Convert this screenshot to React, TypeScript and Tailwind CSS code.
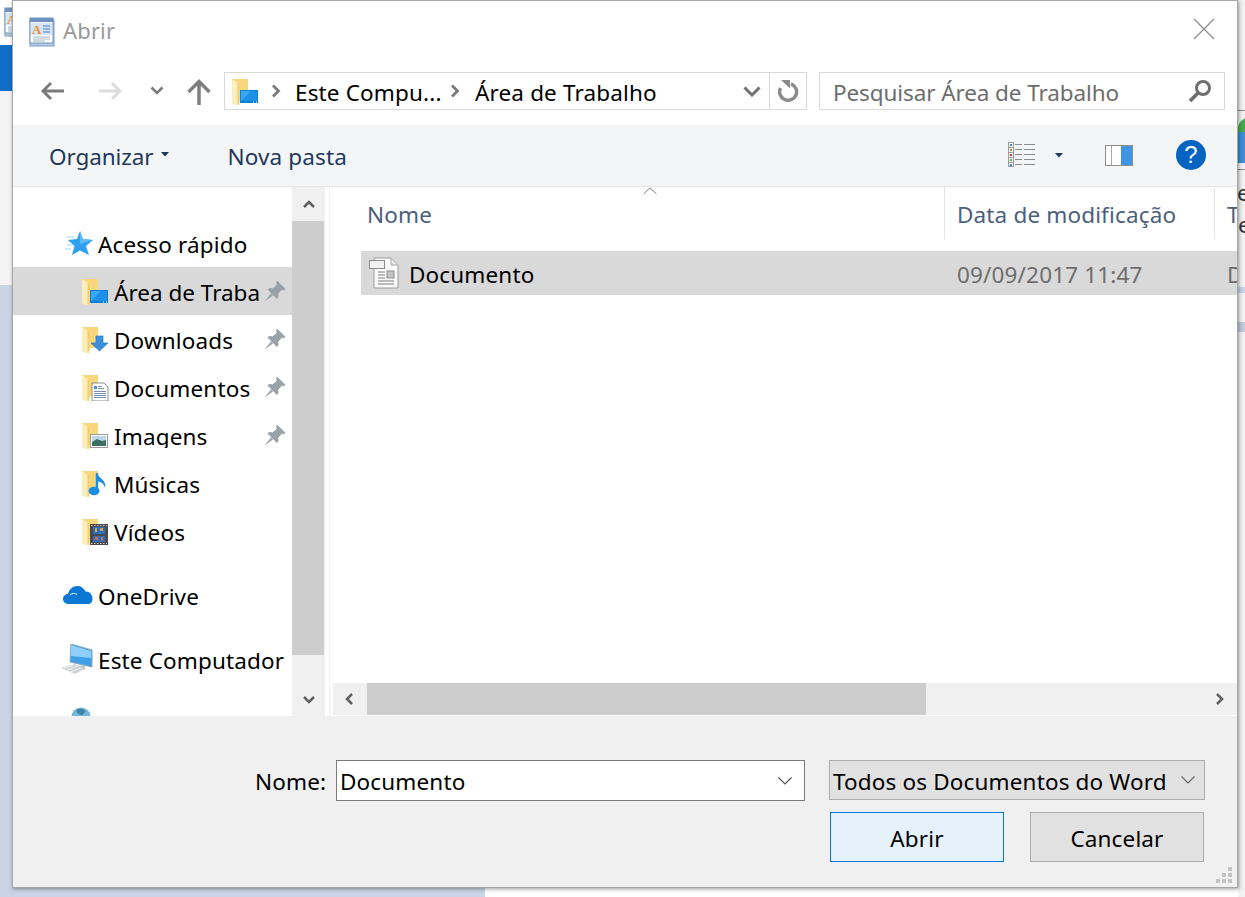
import React from "react";

const Folder = ({ children }: { children?: React.ReactNode }) => (
  <svg width="28" height="28" viewBox="0 0 28 28" className="shrink-0">
    <path d="M0 2H16V23H8L6.500 29L0 26Z" fill="#f8d77c" />
    <path d="M0 2L6 6V29L0 26Z" fill="#fdeebc" />
    <path d="M6 6V29" stroke="#e8bf55" strokeWidth="0.7" />
    {children}
  </svg>
);

const Desktop = () => (
  <>
    <rect x="8" y="13" width="18" height="13" fill="#0a7fd6" />
    <path d="M9 14H25V24H9Z" fill="#3aa7f5" />
    <path d="M9 24L19 14H25V24Z" fill="#1d8fe6" />
    <path d="M21 25h1M24 25h1" stroke="#fff" />
  </>
);
const DlIcon = () => (
  <path d="M14 11H21V18H26L17.500 26L9 18H14Z" fill="#3b8fdc" stroke="#2a78c4" strokeWidth="0.7" />
);
const DocOv = () => (
  <>
    <path d="M10 10H22L26 14V28H10Z" fill="#fff" stroke="#8c8c8c" />
    <path d="M12 13h3v3h-3z" fill="#3b8fdc" />
    <path d="M16 13.500h4M16 15.500h6M12 18.500h12M12 20.500h12M12 22.500h12M12 24.500h12" stroke="#6c86a6" strokeWidth="0.9" />
  </>
);
const ImgOv = () => (
  <>
    <rect x="8.500" y="13.500" width="17" height="13" fill="#fff" stroke="#9b9b9b" />
    <rect x="10" y="15" width="14" height="10" fill="#bcd8ea" />
    <path d="M10 21L15 18L20 20L24 19V25H10Z" fill="#3c6f63" />
  </>
);
const MusicOv = () => (
  <>
    <path d="M15 4V22" stroke="#1c8fe0" strokeWidth="2.400" />
    <ellipse cx="12" cy="22" rx="5.500" ry="4.200" fill="#1c8fe0" />
    <path d="M15 4C17 10 25 11 23 19C22 14 18 13 15 12Z" fill="#1c8fe0" />
  </>
);
const VideoOv = () => (
  <>
    <rect x="8" y="7" width="18" height="21" fill="#4a4a4a" />
    <path d="M9 8.500h16M9 26.500h16" stroke="#c9c9c9" strokeDasharray="1.500 1.500" />
    <rect x="11" y="10" width="12" height="7" fill="#2a6fc4" />
    <rect x="11" y="19" width="12" height="6" fill="#2a6fc4" />
    <path d="M13 11h2v4h-2zM18 11h3v3h-3z" fill="#d6a33a" />
    <path d="M13 20h3v3h-3zM19 20h2v4h-2z" fill="#c96a4b" />
  </>
);

const Pin = () => (
  <svg width="22" height="22" viewBox="0 0 22 22" className="shrink-0">
    <path d="M13 0.500L21.500 9L19.500 10.500L18 9.500L14 14C15 16 14.500 17.500 13 19L3.500 9.500C5 8 6.500 7.500 8.500 8.500L13 4.500L12 3Z" fill="#98a1a7" />
    <path d="M7 13.500L0.500 21.500L9 15.500Z" fill="#98a1a7" />
  </svg>
);

const Star = () => (
  <svg width="28" height="25" viewBox="0 0 28 25">
    <path d="M1 6h8M3 10h6M2 14h6M0 18h6" stroke="#9fd6fa" strokeWidth="1" />
    <path d="M15 0L18 8L28 9L21 15L24 24L15 19.500L7 24L9.500 15L3 9L12 8Z" fill="#2f9ff0" />
    <path d="M15 0L18 8L28 9L15 13Z" fill="#5cbcf8" />
  </svg>
);

const Cloud = () => (
  <svg width="30" height="20" viewBox="0 0 30 20">
    <path d="M6 19C2 19 0 16.500 0 14C0 11 2.500 9 5 9C6 4 10 1 14.500 1C18 1 21 3 22.500 6.500C27 6.500 29.500 9.500 29.500 14C29.500 17 27.500 19 25 19Z" fill="#0a78d4" />
    <path d="M7 10C9 8 12 8 14 9.500" stroke="#fff" strokeWidth="1" fill="none" />
  </svg>
);

const Computer = () => (
  <svg width="34" height="30" viewBox="0 0 34 30">
    <path d="M10 0L31 6V23L9 18Z" fill="#3f9fe8" stroke="#8fa6b8" />
    <path d="M10 1L30 7V14L10 12Z" fill="#8fd0fb" />
    <path d="M20 21L24 22V26L18 25Z" fill="#b8c2ca" />
    <path d="M0 24L13 20L25 24L14 30Z" fill="#cfd3d6" />
    <path d="M3 24L13 21M6 26L17 22M9 28L20 24" stroke="#eef0f2" />
  </svg>
);

const Globe = () => (
  <svg width="20" height="20" viewBox="0 0 22 22">
    <circle cx="11" cy="11" r="10.500" fill="#74b4d8" />
    <path d="M6 3C10 1 14 2 16 5L12 9L7 7Z" fill="#3d82a8" />
  </svg>
);

const AppIcon = ({ className }: { className?: string }) => (
  <svg width="26" height="30" viewBox="0 0 26 30" className={className}>
    <rect x="1" y="3" width="24" height="26" fill="#b3cbe3" stroke="#7d9cbd" />
    <rect x="1" y="1" width="23" height="25" fill="#fff" stroke="#6f93b8" />
    <rect x="1" y="1" width="23" height="4" fill="#6f93c0" />
    <path d="M2 6H23V18H2Z" fill="#d6e6f7" />
    <text x="3" y="17" fontSize="13" fontWeight="700" fill="#f08a24" fontFamily="Liberation Serif, serif">A</text>
    <path d="M14 9h7M14 12h7M14 15h7" stroke="#3d7fd0" />
    <path d="M4 20h17M4 22h17M4 24h12" stroke="#a4b6c8" />
  </svg>
);

const NavRow = ({ icon, label, selected, pin }: { icon: React.ReactNode; label: string; selected?: boolean; pin?: boolean }) => (
  <div className={`h-[48px] flex items-center pl-[69px] pr-[6px] shrink-0 ${selected ? "bg-[#d9d9d9] tracking-[0px]" : ""}`}>
    <div className="w-[32px] shrink-0"><Folder>{icon}</Folder></div>
    <span className="flex-1 whitespace-nowrap overflow-hidden text-black">{label}</span>
    {pin && <Pin />}
  </div>
);

const Chev = ({ d, color = "#606060", w = 2.5, size = 16 }: { d: string; color?: string; w?: number; size?: number }) => (
  <svg width={size} height={size} viewBox="0 0 16 16" className="shrink-0">
    <path d={d} fill="none" stroke={color} strokeWidth={w} />
  </svg>
);

const ThinDown = ({ color = "#555" }: { color?: string }) => (
  <svg width="16" height="10" viewBox="0 0 16 10" className="shrink-0">
    <path d="M1.500 1.500L8 8L14.500 1.500" fill="none" stroke={color} strokeWidth="1.200" />
  </svg>
);

const ViewIcon = () => (
  <svg width="28" height="26" viewBox="0 0 28 26">
    <rect x="0.500" y="0.500" width="5" height="24" fill="#fff" stroke="#9a9a9a" />
    <path d="M1 5.500h4M1 10.500h4M1 15.500h4M1 20.500h4" stroke="#9a9a9a" />
    <rect x="2" y="2" width="2" height="2" fill="#3b7fc4" />
    <rect x="2" y="7" width="2" height="2" fill="#b08a3a" />
    <rect x="2" y="12" width="2" height="2" fill="#c8342a" />
    <rect x="2" y="17" width="2" height="2" fill="#6aa84f" />
    <rect x="2" y="22" width="2" height="2" fill="#3b7fc4" />
    <path d="M7 2.500h7M16 2.500h11M7 7.500h7M16 7.500h11M7 12.500h7M16 12.500h11M7 17.500h7M16 17.500h11M7 22.500h7M16 22.500h11" stroke="#8c8c8c" />
  </svg>
);

const PaneIcon = () => (
  <svg width="28" height="21" viewBox="0 0 28 21">
    <rect x="0.500" y="0.500" width="27" height="20" fill="#fff" stroke="#8c8c8c" />
    <path d="M6.500 1V20" stroke="#a8a8a8" />
    <rect x="16" y="1" width="11" height="19" fill="#3e95e4" />
  </svg>
);

const DocFile = () => (
  <svg width="30" height="32" viewBox="0 0 30 32" className="shrink-0">
    <path d="M5 1H22L29 8V31H5Z" fill="#fbfbfb" stroke="#9a9a9a" />
    <path d="M22 1V8H29" fill="#e4e4e4" stroke="#a8a8a8" />
    <rect x="0.500" y="3.500" width="15" height="8" fill="#f2f2f2" stroke="#8c8c8c" />
    <rect x="18" y="14" width="7" height="7" fill="#c4c4c4" stroke="#8c8c8c" />
    <path d="M9 15h7M9 18h7M9 21h7M9 24h16M9 27h16" stroke="#7a7a7a" />
  </svg>
);

const Btn = ({ label, primary }: { label: string; primary?: boolean }) => (
  <div className={`w-[174px] h-[50px] pt-[4px] flex items-center justify-center border text-black ${primary ? "bg-[#e5f1fb] border-[#0078d7]" : "bg-[#e1e1e1] border-[#adadad]"}`}>{label}</div>
);

export default function App() {
  return (
    <div className="relative w-[1245px] h-[897px] overflow-hidden bg-[#c9d5e6] font-['Noto_Sans',sans-serif] text-[22.500px] leading-none tracking-[0.150px] [&_span]:pt-[4px]">
      {/* Desktop behind the dialog */}
      <div className="absolute left-0 top-0 w-[12px] h-[45px] bg-white overflow-hidden"><AppIcon className="ml-[4px] mt-[7px]" /></div>
      <div className="absolute left-0 top-[45px] w-[12px] h-[46px] bg-[#0f6fc6]" />
      <div className="absolute left-0 top-[91px] w-[12px] h-[194px] bg-[#f3f3f3]" />
      <div className="absolute left-[485px] top-[888px] w-[760px] h-[9px] bg-white" />
      <div className="absolute left-[1238px] top-0 w-[7px] h-[897px] bg-[#f2f2f2] overflow-hidden text-[#333]">
        <div className="absolute left-0 top-[110px] w-[7px] h-[1px] bg-[#8a8a8a]" />
        <div className="absolute left-0 top-[118px] w-[14px] h-[14px] rounded-tl-[10px] bg-[#4aa84f]" />
        <div className="absolute left-0 top-[132px] w-[14px] h-[31px] bg-[#3d8fd6]" />
        <div className="absolute left-0 top-[169px] w-[7px] h-[1px] bg-[#8a8a8a]" />
        <div className="absolute left-[-12px] top-[182px] whitespace-nowrap">se</div>
        <div className="absolute left-[-6px] top-[214px] whitespace-nowrap">je</div>
        <div className="absolute left-0 top-[287px] w-[7px] h-[6px] bg-[#c9d5e6]" />
        <div className="absolute left-0 top-[322px] w-[7px] h-[10px] bg-[#c0cbdc]" />
      </div>

      {/* Dialog */}
      <div className="absolute left-[12px] top-0 w-[1226px] h-[888px] flex flex-col bg-white border border-[#a6a6a6] shadow-[1px_1px_4px_rgba(0,0,0,0.4)]">
        {/* Title */}
        <div className="h-[59px] shrink-0 flex items-center pl-[16px] pr-[22px]">
          <AppIcon className="mt-[2px]" />
          <div className="ml-[8px] mb-[2px] text-[#999999] text-[22px]">Abrir</div>
          <svg width="22" height="22" viewBox="0 0 22 22" className="ml-auto mb-[4px]">
            <path d="M1 1L21 21M21 1L1 21" stroke="#8f8f8f" strokeWidth="1.300" />
          </svg>
        </div>

        {/* Address row */}
        <div className="h-[65px] shrink-0 flex items-start pt-[12px] pr-[12px]">
          <div className="w-[211px] shrink-0 flex items-center h-[38px] pl-[28px]">
            <svg width="24" height="20" viewBox="0 0 24 20"><path d="M23 10H2M10 2L2 10L10 18" fill="none" stroke="#7a7a7a" strokeWidth="3" /></svg>
            <svg width="24" height="20" viewBox="0 0 24 20" className="ml-[33px]"><path d="M1 10H22M14 2L22 10L14 18" fill="none" stroke="#dcdcdc" strokeWidth="3" /></svg>
            <svg width="14" height="10" viewBox="0 0 14 10" className="ml-[28px]"><path d="M1.500 1.500L7 7L12.500 1.500" fill="none" stroke="#7a7a7a" strokeWidth="2.500" /></svg>
            <svg width="24" height="26" viewBox="0 0 24 26" className="ml-[23px] mt-[2px]"><path d="M12 26V3M1.500 13L12 2.500L22.500 13" fill="none" stroke="#7f7f7f" strokeWidth="3.500" /></svg>
          </div>
          <div className="w-[583px] h-[38px] shrink-0 border border-[#d9d9d9] flex items-center">
            <div className="ml-[7px] w-[27px] h-[28px] shrink-0"><Folder><Desktop /></Folder></div>
            <svg width="10" height="14" viewBox="0 0 10 14" className="ml-[12px] shrink-0"><path d="M2 1.500L7.500 7L2 12.500" fill="none" stroke="#7a7a7a" strokeWidth="2.800" /></svg>
            <span className="ml-[14px] text-black whitespace-nowrap w-[146px]">Este Compu...</span>
            <svg width="10" height="14" viewBox="0 0 10 14" className="ml-[9px] shrink-0"><path d="M2 1.500L7.500 7L2 12.500" fill="none" stroke="#7a7a7a" strokeWidth="2.800" /></svg>
            <span className="ml-[15px] text-black whitespace-nowrap">Área de Trabalho</span>
            <div className="ml-auto h-full flex items-center">
              <svg width="18" height="11" viewBox="0 0 18 11" className="mr-[8px]"><path d="M1.500 1.500L9 9L16.500 1.500" fill="none" stroke="#707070" strokeWidth="3" /></svg>
              <div className="h-full w-[37px] border-l border-[#d9d9d9] flex items-center justify-center">
                <svg width="22" height="24" viewBox="0 0 22 24"><path d="M14 4.800A8.500 8.500 0 1 1 3.500 9" fill="none" stroke="#8a8a8a" strokeWidth="3.400" /><path d="M4 1H13V9.500Z" fill="#8a8a8a" /></svg>
              </div>
            </div>
          </div>
          <div className="ml-[12px] w-[406px] h-[38px] shrink-0 border border-[#d9d9d9] flex items-center pl-[13px] pr-[12px] text-[#6d6d6d]">
            <span className="whitespace-nowrap tracking-[-0.100px]">Pesquisar Área de Trabalho</span>
            <svg width="24" height="24" viewBox="0 0 24 24" className="ml-auto"><circle cx="15" cy="9" r="6.500" fill="none" stroke="#6f6f6f" strokeWidth="3" /><path d="M10 14L2 22" stroke="#6f6f6f" strokeWidth="3.800" /></svg>
          </div>
        </div>

        {/* Toolbar */}
        <div className="h-[62px] shrink-0 bg-[#f4f5f7] border-b border-[#e6e6e6] flex items-center pl-[36px] pr-[31px] text-[#1e395b]">
          <span className="tracking-[-0.100px]">Organizar</span>
          <svg width="8" height="5" viewBox="0 0 8 5" className="ml-[8px] mb-[2px]"><path d="M0 0H8L4 4.500Z" fill="#1e395b" /></svg>
          <span className="ml-[58px]">Nova pasta</span>
          <div className="ml-auto flex items-center mb-[1px]">
            <ViewIcon />
            <svg width="8" height="5" viewBox="0 0 8 5" className="ml-[19px]"><path d="M0 0H8L4 4.500Z" fill="#1e395b" /></svg>
            <div className="ml-[42px]"><PaneIcon /></div>
            <div className="ml-[43px] w-[30px] h-[30px] rounded-full bg-[#0563c1] flex items-center justify-center text-white text-[24px] font-['Liberation_Sans',sans-serif]">?</div>
          </div>
        </div>

        {/* Main */}
        <div className="h-[529px] shrink-0 flex overflow-hidden">
          {/* Nav */}
          <div className="w-[279px] shrink-0 overflow-hidden flex flex-col text-black">
            <div className="h-[34px] shrink-0" />
            <div className="h-[46px] shrink-0 flex items-center pl-[52px] pb-[2px]">
              <div className="w-[33px] shrink-0 h-[25px]"><Star /></div>
              <span>Acesso rápido</span>
            </div>
            <NavRow selected pin icon={<Desktop />} label="Área de Traba" />
            <NavRow pin icon={<DlIcon />} label="Downloads" />
            <NavRow pin icon={<DocOv />} label="Documentos" />
            <NavRow pin icon={<ImgOv />} label="Imagens" />
            <NavRow icon={<MusicOv />} label="Músicas" />
            <NavRow icon={<VideoOv />} label="Vídeos" />
            <div className="h-[16px] shrink-0" />
            <div className="h-[48px] shrink-0 flex items-center pl-[50px]">
              <div className="w-[35px] shrink-0 h-[20px]"><Cloud /></div>
              <span>OneDrive</span>
            </div>
            <div className="h-[16px] shrink-0" />
            <div className="h-[48px] shrink-0 flex items-center pl-[48px]">
              <div className="w-[37px] shrink-0 h-[30px]"><Computer /></div>
              <span className="whitespace-nowrap">Este Computador</span>
            </div>
            <div className="h-[40px] shrink-0 flex items-start pt-[24px] pl-[58px]">
              <div className="w-[27px] shrink-0"><Globe /></div>
              <span className="mt-[4px]">Rede</span>
            </div>
          </div>
          {/* Nav scrollbar */}
          <div className="w-[33px] shrink-0 bg-[#f0f0f0] flex flex-col">
            <div className="h-[34px] shrink-0 flex items-center justify-center"><Chev d="M3 11L8 6L13 11" /></div>
            <div className="h-[434px] shrink-0 w-[32px] bg-[#cdcdcd]" />
            <div className="flex-1 flex items-center justify-center pt-[28px]"><Chev d="M3 5L8 10L13 5" /></div>
          </div>
          <div className="w-[4px] shrink-0 bg-white" />
          <div className="w-[1px] shrink-0 bg-[#f0f0f0]" />
          {/* File list */}
          <div className="flex-1 min-w-0 flex flex-col relative">
            <svg width="14" height="8" viewBox="0 0 14 8" className="absolute left-[313px] top-[0px]"><path d="M0.500 7L7 0.800L13.500 7" fill="none" stroke="#7f7f7f" /></svg>
            <div className="h-[52px] shrink-0 flex text-[#4c607a] overflow-hidden">
              <div className="w-[615px] shrink-0 border-r border-[#e5e5e5] pl-[37px] flex items-center"><span>Nome</span></div>
              <div className="w-[270px] shrink-0 border-r border-[#e5e5e5] pl-[12px] flex items-center whitespace-nowrap"><span>Data de modificação</span></div>
              <div className="pl-[12px] flex items-center"><span>T</span></div>
            </div>
            <div className="h-[12px] shrink-0" />
            <div className="h-[44px] shrink-0 ml-[31px] bg-[#d9d9d9] flex items-center overflow-hidden">
              <div className="ml-[8px] mr-[10px]"><DocFile /></div>
              <span className="w-[548px] shrink-0 text-black">Documento</span>
              <span className="w-[270px] shrink-0 text-[#6d6d6d] whitespace-nowrap">09/09/2017 11:47</span>
              <span className="text-[#6d6d6d]">D</span>
            </div>
            <div className="flex-1" />
            {/* Horizontal scrollbar */}
            <div className="h-[32px] shrink-0 ml-[3px] mb-[1px] bg-[#f0f0f0] flex items-center">
              <div className="w-[34px] shrink-0 flex items-center justify-center"><Chev d="M10 3L5 8L10 13" /></div>
              <div className="w-[559px] h-full shrink-0 bg-[#cdcdcd]" />
              <div className="ml-auto mr-[10px]"><Chev d="M6 3L11 8L6 13" /></div>
            </div>
          </div>
        </div>

        {/* Footer */}
        <div className="flex-1 bg-[#f0f0f0] relative text-black">
          <div className="flex items-start pt-[44px] pl-[242px]">
            <span className="h-[41px] w-[81px] flex items-center">Nome:</span>
            <div className="w-[469px] h-[41px] shrink-0 bg-white border border-[#7a7a7a] flex items-center pl-[3px] pr-[11px]">
              <span>Documento</span>
              <div className="ml-auto"><ThinDown /></div>
            </div>
            <div className="ml-[24px] w-[376px] h-[40px] shrink-0 bg-[#e1e1e1] border border-[#adadad] flex items-center pl-[3px] pr-[8px]">
              <span className="whitespace-nowrap">Todos os Documentos do Word</span>
              <div className="ml-auto"><ThinDown color="#666" /></div>
            </div>
          </div>
          <div className="flex pl-[817px] gap-[26px] mt-[11px]">
            <Btn primary label="Abrir" />
            <Btn label="Cancelar" />
          </div>
          <svg width="16" height="16" viewBox="0 0 16 16" className="absolute right-[5px] bottom-[4px]">
            <path d="M12 0h4v4h-4zM6 6h4v4H6zM12 6h4v4h-4zM0 12h4v4H0zM6 12h4v4H6zM12 12h4v4h-4z" fill="#c4c4c4" />
          </svg>
        </div>
      </div>
    </div>
  );
}
